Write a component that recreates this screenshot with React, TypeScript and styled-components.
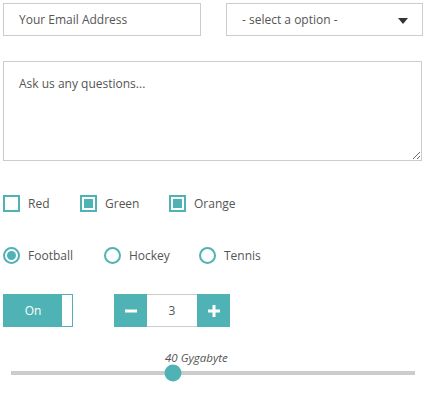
import React, { useState } from 'react';
import styled, { createGlobalStyle } from 'styled-components';

const teal = '#4fb2b5';

const GlobalStyle = createGlobalStyle`
  body {
    margin: 0;
    background: #fff;
    font-family: "Open Sans", "Noto Sans", sans-serif;
    color: #555;
  }
`;

const Page = styled.div`
  width: 419px;
  min-height: 395px;
  padding: 3px 3px 0 3px;
`;

const FieldRow = styled.div`
  display: grid;
  grid-template-columns: 198px 197px;
  gap: 25px;
`;

const TextInput = styled.input`
  box-sizing: border-box;
  width: 100%;
  height: 33px;
  border: 1px solid #ccc;
  padding: 0 15px;
  font-family: inherit;
  font-size: 12px;
  color: #555;
  outline: none;
  &::placeholder {
    color: #555;
  }
`;

const SelectWrap = styled.div`
  position: relative;
`;

const Select = styled.select`
  box-sizing: border-box;
  width: 100%;
  height: 33px;
  border: 1px solid #ccc;
  padding: 0 15px;
  background: #fff;
  font-family: inherit;
  font-size: 12px;
  color: #555;
  appearance: none;
  outline: none;
  border-radius: 0;
`;

const Caret = styled.span`
  position: absolute;
  right: 15px;
  top: 15px;
  width: 0;
  height: 0;
  border-left: 5px solid transparent;
  border-right: 5px solid transparent;
  border-top: 6px solid #333;
  pointer-events: none;
`;

const TextArea = styled.textarea`
  display: block;
  box-sizing: border-box;
  width: 100%;
  height: 100px;
  margin-top: 25px;
  border: 1px solid #ccc;
  padding: 13px 15px;
  font-family: inherit;
  font-size: 12px;
  color: #555;
  outline: none;
  &::placeholder {
    color: #555;
  }
`;

const OptionRow = styled.div<{ $top: number }>`
  display: flex;
  align-items: center;
  margin-top: ${({ $top }) => $top}px;
  height: 17px;
`;

const Option = styled.label<{ $width: number }>`
  display: flex;
  align-items: center;
  gap: 8px;
  width: ${({ $width }) => $width}px;
  font-size: 12px;
  color: #555;
  cursor: pointer;
`;

const Box = styled.span<{ $checked: boolean; $round?: boolean }>`
  box-sizing: border-box;
  width: 17px;
  height: 17px;
  flex: none;
  border: 2px solid ${teal};
  border-radius: ${({ $round }) => ($round ? '50%' : '0')};
  padding: 2px;
  background: #fff;
  &::after {
    content: '';
    display: ${({ $checked }) => ($checked ? 'block' : 'none')};
    width: 100%;
    height: 100%;
    background: ${teal};
    border-radius: ${({ $round }) => ($round ? '50%' : '0')};
  }
`;

const ControlRow = styled.div`
  display: flex;
  align-items: center;
  gap: 41px;
  margin-top: 30px;
`;

const Toggle = styled.button`
  box-sizing: border-box;
  display: flex;
  width: 70px;
  height: 33px;
  padding: 0;
  border: 1px solid ${teal};
  background: ${teal};
  cursor: pointer;
`;

const ToggleLabel = styled.span`
  flex: 1;
  align-self: center;
  color: #fff;
  font-family: "Open Sans", "Noto Sans", sans-serif;
  font-size: 12px;
  text-align: center;
`;

const ToggleKnob = styled.span`
  width: 10px;
  height: 100%;
  background: #fff;
`;

const Stepper = styled.div`
  display: flex;
  height: 33px;
`;

const StepButton = styled.button`
  width: 33px;
  height: 33px;
  border: none;
  padding: 0;
  background: ${teal};
  display: flex;
  align-items: center;
  justify-content: center;
  cursor: pointer;
`;

const StepValue = styled.div`
  box-sizing: border-box;
  width: 50px;
  height: 33px;
  border-top: 1px solid #ccc;
  border-bottom: 1px solid #ccc;
  display: flex;
  align-items: center;
  justify-content: center;
  font-size: 12px;
  color: #555;
`;

const SliderBlock = styled.div`
  margin: 22px 7px 0 8px;
  padding-bottom: 12px;
`;

const SliderCaption = styled.div`
  font-size: 11.5px;
  font-style: italic;
  color: #555;
  padding-left: 154px;
  line-height: 17px;
`;

const Track = styled.div`
  position: relative;
  height: 4px;
  margin-top: 5px;
  background: #ccc;
`;

const Thumb = styled.span`
  position: absolute;
  top: 2px;
  z-index: 1;
  width: 17px;
  height: 17px;
  transform: translate(-50%, -50%);
  border-radius: 50%;
  background: ${teal};
`;

const colours = [
  { name: 'Red', width: 77 },
  { name: 'Green', width: 89 },
  { name: 'Orange', width: 90 },
];

const sports = [
  { name: 'Football', width: 101 },
  { name: 'Hockey', width: 95 },
  { name: 'Tennis', width: 80 },
];

const App: React.FC = () => {
  const [checked, setChecked] = useState<string[]>(['Green', 'Orange']);
  const [sport, setSport] = useState('Football');
  const [count, setCount] = useState(3);
  const [on, setOn] = useState(true);
  const gigs = 40;

  const toggleColour = (name: string) => {
    setChecked((prev) => (prev.includes(name) ? prev.filter((c) => c !== name) : [...prev, name]));
  };

  return (
    <Page>
      <GlobalStyle />
      <FieldRow>
        <TextInput placeholder="Your Email Address" />
        <SelectWrap>
          <Select defaultValue="">
            <option value="">- select a option -</option>
            <option value="a">Option A</option>
            <option value="b">Option B</option>
          </Select>
          <Caret />
        </SelectWrap>
      </FieldRow>
      <TextArea placeholder="Ask us any questions..." />
      <OptionRow $top={34}>
        {colours.map((c) => (
          <Option key={c.name} $width={c.width} onClick={() => toggleColour(c.name)}>
            <Box $checked={checked.includes(c.name)} />
            {c.name}
          </Option>
        ))}
      </OptionRow>
      <OptionRow $top={35}>
        {sports.map((s) => (
          <Option key={s.name} $width={s.width} onClick={() => setSport(s.name)}>
            <Box $round $checked={sport === s.name} />
            {s.name}
          </Option>
        ))}
      </OptionRow>
      <ControlRow>
        <Toggle onClick={() => setOn(!on)}>
          <ToggleLabel>{on ? 'On' : 'Off'}</ToggleLabel>
          <ToggleKnob />
        </Toggle>
        <Stepper>
          <StepButton onClick={() => setCount(count - 1)}>
            <svg width="12" height="12" viewBox="0 0 12 12">
              <rect x="0" y="4.5" width="12" height="3" fill="#fff" />
            </svg>
          </StepButton>
          <StepValue>{count}</StepValue>
          <StepButton onClick={() => setCount(count + 1)}>
            <svg width="12" height="12" viewBox="0 0 12 12">
              <rect x="0" y="4.5" width="12" height="3" fill="#fff" />
              <rect x="4.5" y="0" width="3" height="12" fill="#fff" />
            </svg>
          </StepButton>
        </Stepper>
      </ControlRow>
      <SliderBlock>
        <SliderCaption>{gigs} Gygabyte</SliderCaption>
        <Track>
          <Thumb style={{ left: `${(162 / 404) * 100}%` }} />
        </Track>
      </SliderBlock>
    </Page>
  );
};

export default App;
